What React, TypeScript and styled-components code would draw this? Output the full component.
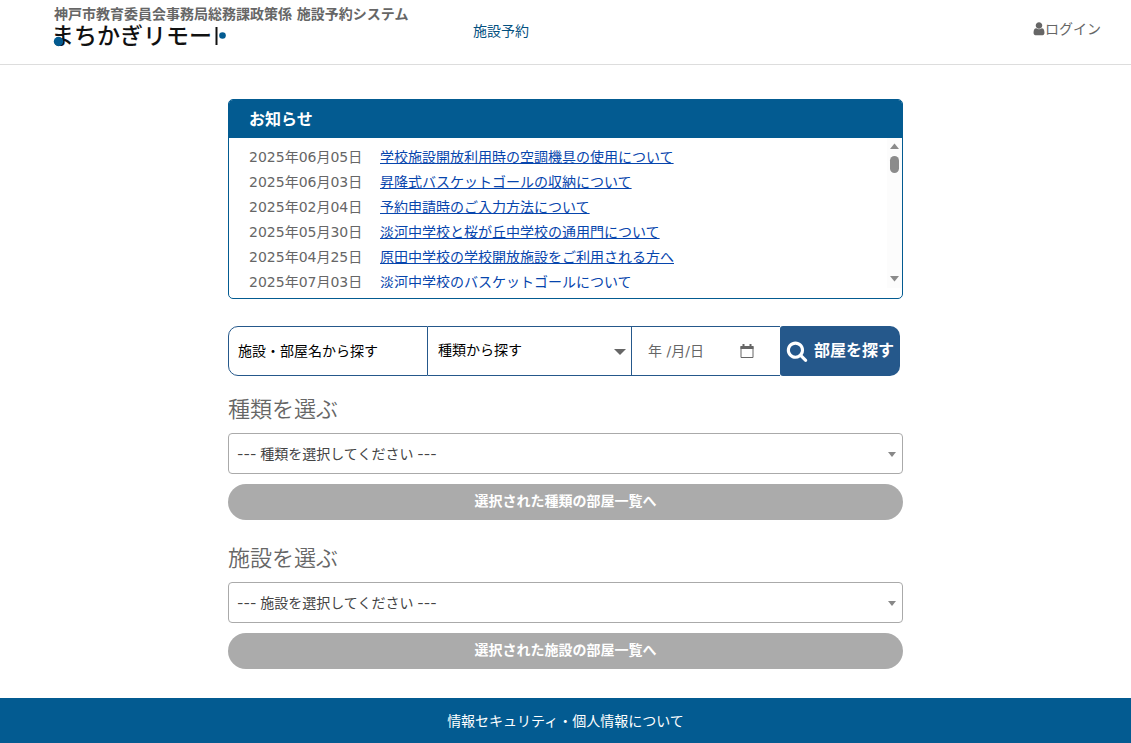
import React, { useState } from "react";
import styled, { createGlobalStyle } from "styled-components";

const blue = "#035b91";
const searchBlue = "#25588b";
const grey = "#666666";

const GlobalStyle = createGlobalStyle`
  *, *::before, *::after { box-sizing: border-box; }
  body {
    margin: 0;
    background: #ffffff;
    color: ${grey};
    font-family: "DejaVu Sans", "Noto Sans CJK JP", sans-serif;
    font-size: 14px;
    line-height: 20px;
  }
  input, select, button { font: inherit; margin: 0; }
  a { text-decoration: none; }
`;

const Page = styled.div`
  display: flex;
  flex-direction: column;
  min-height: 100vh;
`;

const Header = styled.header`
  display: flex;
  align-items: flex-start;
  height: 65px;
  padding: 4px 30px 0 54px;
  border-bottom: 1px solid #dddddd;
`;

const Brand = styled.a`
  display: flex;
  flex-direction: column;
  flex: 0 0 419px;
  color: ${grey};
  font-weight: 700;
  white-space: nowrap;
`;

const Wordmark = styled.svg`
  display: block;
  width: 180px;
  height: 26px;
  overflow: visible;
  font-size: 23px;
  font-weight: 500;
  font-family: "Noto Sans CJK JP", sans-serif;
`;

const Nav = styled.nav`
  flex: 1;
  padding-top: 17px;
`;

const NavLink = styled.a`
  color: #03507f;
`;

const LoginLink = styled.a`
  display: flex;
  align-items: center;
  padding-top: 15px;
  color: ${grey};
`;

const Main = styled.main`
  flex: 1;
  width: 100%;
  max-width: 675px;
  margin: 0 auto;
  padding: 34px 0 29px;
`;

const Notices = styled.section`
  border: 1px solid ${blue};
  border-radius: 5px;
  overflow: hidden;
  padding-bottom: 10px;
`;

const NoticesTitle = styled.h2`
  margin: 0;
  padding: 10px 20px 8px;
  background: ${blue};
  color: #ffffff;
  font-size: 16px;
  line-height: 20px;
`;

const NoticesBody = styled.div`
  display: flex;
  height: 150px;
`;

const NoticeList = styled.ul`
  flex: 1;
  margin: 0;
  padding: 7px 20px;
  list-style: none;
  overflow-y: scroll;
  scrollbar-width: none;
`;

const NoticeRow = styled.li`
  display: flex;
  line-height: 25px;
`;

const NoticeDate = styled.time`
  flex: 0 0 131px;
`;

const NoticeLink = styled.a`
  color: #0645ad;
  text-decoration: underline;
`;

const ScrollTrack = styled.div`
  display: flex;
  flex-direction: column;
  justify-content: space-between;
  align-items: center;
  width: 15px;
  padding: 5px 0 6px;
  background: #fcfcfc;
`;

const ScrollRail = styled.div`
  flex: 1;
  width: 9px;
  padding: 7px 0;
`;

const ScrollThumb = styled.div`
  height: 17px;
  border-radius: 5px;
  background: #8b8b8b;
`;

const SearchForm = styled.form`
  display: grid;
  grid-template-columns: 200fr 204fr 148fr 120fr;
  height: 50px;
  margin: 27px 3px 0 0;
`;

const Cell = styled.div<{ $first?: boolean; $last?: boolean }>`
  position: relative;
  display: flex;
  align-items: center;
  border: 1px solid ${searchBlue};
  border-left-width: ${(p) => (p.$first ? "1px" : "0")};
  border-right-width: ${(p) => (p.$last ? "0" : "1px")};
  border-radius: ${(p) => (p.$first ? "10px 0 0 10px" : "0")};
`;

const TextField = styled.input<{ $muted?: boolean }>`
  width: 100%;
  height: 100%;
  padding: 0 ${(p) => (p.$muted ? "16px" : "9px")};
  border: 0;
  background: transparent;
  color: ${(p) => (p.$muted ? grey : "#000000")};
  &::placeholder { color: inherit; opacity: 1; }
`;

const TypeSelect = styled.select`
  width: 100%;
  height: 100%;
  padding: 0 30px 2px 10px;
  border: 0;
  appearance: none;
  background: transparent;
  color: #000000;
`;

const Caret = styled.svg<{ $right: number }>`
  position: absolute;
  top: 50%;
  right: ${(p) => p.$right}px;
  margin-top: -2px;
  pointer-events: none;
`;

const CalendarIcon = styled.svg`
  position: absolute;
  right: 26px;
  pointer-events: none;
`;

const SearchButton = styled.button`
  display: flex;
  align-items: center;
  justify-content: center;
  gap: 6px;
  padding: 0;
  border: 0;
  border-radius: 3px 10px 10px 3px;
  background: ${searchBlue};
  color: #ffffff;
  font-size: 16px;
  font-weight: 700;
  white-space: nowrap;
`;

const Picker = styled.form`
  display: flex;
  flex-direction: column;
  padding-top: 18px;
  & + & { padding-top: 23px; }
`;

const PickerTitle = styled.label`
  padding-bottom: 7px;
  font-size: 22px;
  line-height: 32px;
  font-weight: 350;
`;

const PickerBox = styled.div`
  position: relative;
  height: 41px;
  margin-bottom: 10px;
`;

const PickerSelect = styled.select`
  width: 100%;
  height: 100%;
  padding: 0 30px 0 8px;
  border: 1px solid #aaaaaa;
  border-radius: 4px;
  appearance: none;
  background: #ffffff;
  color: #444444;
  font-family: Inter, "Noto Sans CJK JP", sans-serif;
`;

const PickerButton = styled.button`
  height: 36px;
  padding: 0 0 2px;
  border: 0;
  border-radius: 18px;
  background: #ababab;
  color: #ffffff;
  font-weight: 700;
`;

const Footer = styled.footer`
  display: flex;
  align-items: center;
  justify-content: center;
  height: 45px;
  background: ${blue};
`;

const FooterLink = styled.a`
  color: #ffffff;
`;

const notices = [
  ["2025年06月05日", "学校施設開放利用時の空調機具の使用について"],
  ["2025年06月03日", "昇降式バスケットゴールの収納について"],
  ["2025年02月04日", "予約申請時のご入力方法について"],
  ["2025年05月30日", "淡河中学校と桜が丘中学校の通用門について"],
  ["2025年04月25日", "原田中学校の学校開放施設をご利用される方へ"],
  ["2025年07月03日", "淡河中学校のバスケットゴールについて"],
];

function Logo() {
  return (
    <Wordmark viewBox="0 0 180 26" aria-label="まちかぎリモート" role="img">
      <text x="-3" y="20" fill="#111111">まちかぎリモー</text>
      <circle cx="4.5" cy="17.5" r="4.7" fill={blue} />
      <path d="M162.5 3v18" stroke="#111111" strokeWidth="2" />
      <circle cx="168.5" cy="11.5" r="3.3" fill={blue} />
    </Wordmark>
  );
}

function UserIcon() {
  return (
    <svg width="12" height="14" viewBox="192 128 1408 1600" fill={grey} aria-hidden="true">
      <path d="M1536 1399q0 109-62.5 187t-150.5 78h-854q-88 0-150.5-78t-62.5-187q0-85 8.5-160.5t31.5-152 58.5-131 94-89 134.5-34.5q131 128 313 128t313-128q76 0 134.5 34.5t94 89 58.5 131 31.5 152 8.5 160.5zm-256-887q0 159-112.5 271.5t-271.5 112.5-271.5-112.5-112.5-271.5 112.5-271.5 271.5-112.5 271.5 112.5 112.5 271.5z" />
    </svg>
  );
}

function SearchIcon() {
  return (
    <svg width="22" height="22" viewBox="0 0 1792 1792" fill="#ffffff" aria-hidden="true">
      <path d="M1216 832q0-185-131.5-316.5t-316.5-131.5-316.5 131.5-131.5 316.5 131.5 316.5 316.5 131.5 316.5-131.5 131.5-316.5zm512 832q0 52-38 90t-90 38q-54 0-90-38l-343-342q-179 124-399 124-143 0-273.5-55.5t-225-150-150-225-55.5-273.5 55.5-273.5 150-225 225-150 273.5-55.5 273.5 55.5 225 150 150 225 55.5 273.5q0 220-124 399l343 343q37 37 37 90z" />
    </svg>
  );
}

function PickerForm({ id, title, prompt, action }: { id: string; title: string; prompt: string; action: string }) {
  return (
    <Picker>
      <PickerTitle htmlFor={id}>{title}</PickerTitle>
      <PickerBox>
        <PickerSelect id={id}>
          <option>{prompt}</option>
        </PickerSelect>
        <Caret $right={7} width="8" height="5" viewBox="0 0 8 5" fill="#888888" aria-hidden="true">
          <path d="M0 0h8L4 5z" />
        </Caret>
      </PickerBox>
      <PickerButton type="button">{action}</PickerButton>
    </Picker>
  );
}

export default function App() {
  const [offset, setOffset] = useState(0);

  return (
    <Page>
      <GlobalStyle />
      <Header>
        <Brand href="#">
          神戸市教育委員会事務局総務課政策係 施設予約システム
          <Logo />
        </Brand>
        <Nav>
          <NavLink href="#">施設予約</NavLink>
        </Nav>
        <LoginLink href="#">
          <UserIcon />
          ログイン
        </LoginLink>
      </Header>

      <Main>
        <Notices>
          <NoticesTitle>お知らせ</NoticesTitle>
          <NoticesBody>
            <NoticeList onScroll={(e) => setOffset(e.currentTarget.scrollTop)}>
              {notices.map(([date, text]) => (
                <NoticeRow key={text}>
                  <NoticeDate>{date}</NoticeDate>
                  <NoticeLink href="#">{text}</NoticeLink>
                </NoticeRow>
              ))}
            </NoticeList>
            <ScrollTrack aria-hidden="true">
              <svg width="9" height="6" viewBox="0 0 9 6" fill="#8b8b8b">
                <path d="M0 6L4.5 0.5L9 6z" />
              </svg>
              <ScrollRail>
                <ScrollThumb style={{ transform: `translateY(${offset}px)` }} />
              </ScrollRail>
              <svg width="9" height="6" viewBox="0 0 9 6" fill="#8b8b8b">
                <path d="M0 0h9L4.5 5.5z" />
              </svg>
            </ScrollTrack>
          </NoticesBody>
        </Notices>

        <SearchForm>
          <Cell $first>
            <TextField type="text" aria-label="施設・部屋名" placeholder="施設・部屋名から探す" />
          </Cell>
          <Cell>
            <TypeSelect aria-label="種類">
              <option>種類から探す</option>
            </TypeSelect>
            <Caret $right={5} width="12" height="6" viewBox="0 0 12 6" fill={grey} aria-hidden="true">
              <path d="M0 0h12L6 6z" />
            </Caret>
          </Cell>
          <Cell $last>
            <TextField $muted type="text" aria-label="利用日" placeholder="年 /月/日" />
            <CalendarIcon width="14" height="14" viewBox="0 0 14 14" aria-hidden="true">
              <path d="M1 2.5h12v11H1z" fill="none" stroke={grey} />
              <path d="M.5 2h13v3H.5zM2.5 0h2v3h-2zM9.5 0h2v3h-2z" fill={grey} />
            </CalendarIcon>
          </Cell>
          <SearchButton type="button">
            <SearchIcon />
            部屋を探す
          </SearchButton>
        </SearchForm>

        <PickerForm
          id="room-type"
          title="種類を選ぶ"
          prompt="--- 種類を選択してください ---"
          action="選択された種類の部屋一覧へ"
        />
        <PickerForm
          id="facility"
          title="施設を選ぶ"
          prompt="--- 施設を選択してください ---"
          action="選択された施設の部屋一覧へ"
        />
      </Main>

      <Footer>
        <FooterLink href="#">情報セキュリティ・個人情報について</FooterLink>
      </Footer>
    </Page>
  );
}
